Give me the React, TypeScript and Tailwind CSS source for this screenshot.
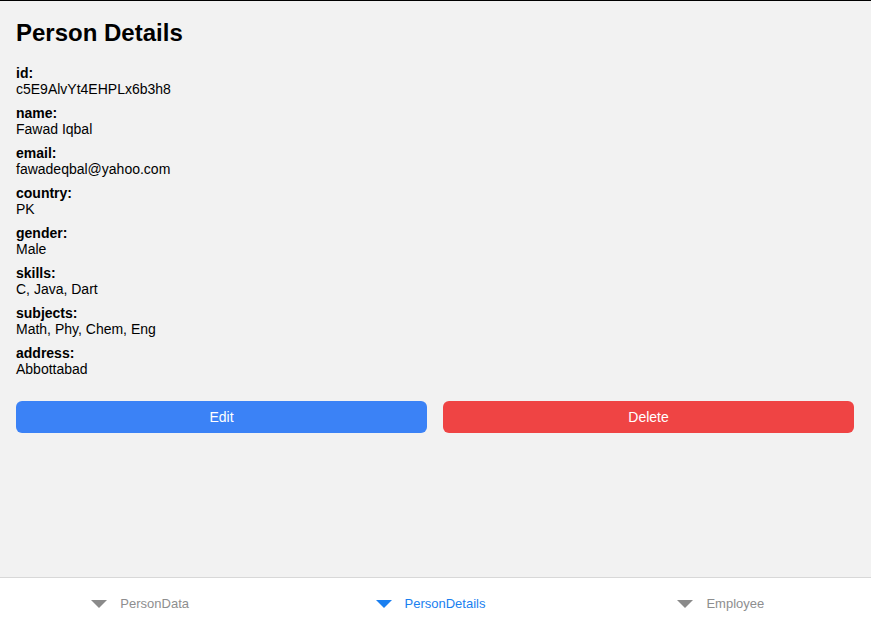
import React from 'react';

const person: [string, string][] = [
  ['id', 'c5E9AlvYt4EHPLx6b3h8'],
  ['name', 'Fawad Iqbal'],
  ['email', 'fawadeqbal@yahoo.com'],
  ['country', 'PK'],
  ['gender', 'Male'],
  ['skills', 'C, Java, Dart'],
  ['subjects', 'Math, Phy, Chem, Eng'],
  ['address', 'Abbottabad'],
];

const tabs = [
  { name: 'PersonData', active: false },
  { name: 'PersonDetails', active: true },
  { name: 'Employee', active: false },
];

function Caret({ color }: { color: string }) {
  return (
    <svg width="16" height="8" viewBox="0 0 16 8">
      <path d="M0 0 L16 0 L8 8 Z" fill={color} />
    </svg>
  );
}

export default function App() {
  return (
    <div
      className="flex h-[624px] flex-col border-t border-black bg-[#f2f2f2] text-black"
      style={{ fontFamily: '"Liberation Sans", Arial, sans-serif' }}
    >
      <div className="flex-1 pt-4 pr-[17px] pl-4">
        <h1 className="mb-4 text-2xl leading-8 font-bold">Person Details</h1>

        {person.map(([label, value]) => (
          <div key={label} className="mb-2 text-sm leading-4">
            <div className="font-bold">{label}:</div>
            <div>{value}</div>
          </div>
        ))}

        <div className="mt-6 flex gap-4">
          <button className="h-8 flex-1 rounded-md bg-[#3b82f6] text-sm text-white">Edit</button>
          <button className="h-8 flex-1 rounded-md bg-[#ef4444] text-sm text-white">Delete</button>
        </div>
      </div>

      {/* Bottom tabs */}
      <div className="flex h-[47px] border-t border-[#d8d8d8] bg-white pt-[6px]">
        {tabs.map((t) => (
          <div key={t.name} className="flex flex-1 items-center justify-center gap-[13px] pr-[10px]">
            <Caret color={t.active ? '#1a7ff0' : '#8a8a8a'} />
            <span className={t.active ? 'text-[13px] text-[#1a7ff0]' : 'text-[13px] text-[#8e8e8f]'}>
              {t.name}
            </span>
          </div>
        ))}
      </div>
    </div>
  );
}
